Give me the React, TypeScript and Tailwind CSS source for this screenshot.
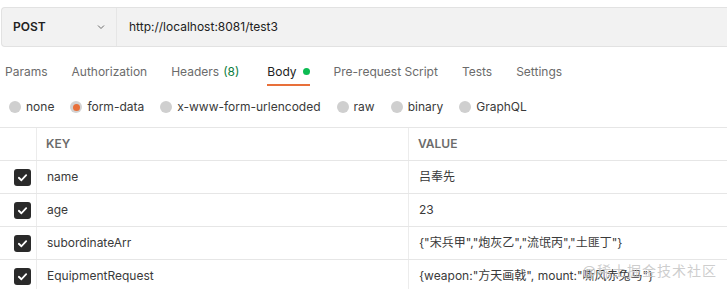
import React from "react";

const tabs = [
  { label: "Params" },
  { label: "Authorization" },
  { label: "Headers", count: "(8)" },
  { label: "Body", active: true },
  { label: "Pre-request Script" },
  { label: "Tests" },
  { label: "Settings" },
];

const bodyTypes = [
  { label: "none" },
  { label: "form-data", checked: true },
  { label: "x-www-form-urlencoded" },
  { label: "raw" },
  { label: "binary" },
  { label: "GraphQL" },
];

const rows = [
  { key: "name", value: "吕奉先" },
  { key: "age", value: "23" },
  { key: "subordinateArr", value: '{"宋兵甲","炮灰乙","流氓丙","土匪丁"}' },
  { key: "EquipmentRequest", value: '{weapon:"方天画戟", mount:"嘶风赤兔马"}' },
];

function Check() {
  return (
    <div className="w-[17px] h-[17px] rounded-[3px] bg-[#2a2a2a] flex items-center justify-center">
      <svg width="11" height="11" viewBox="0 0 12 12" fill="none">
        <path d="M2 6.3 L4.8 9 L10 3.4" stroke="white" strokeWidth="2" strokeLinecap="round" strokeLinejoin="round" />
      </svg>
    </div>
  );
}

export default function App() {
  return (
    <div
      className="w-[727px] h-[289px] overflow-hidden bg-white relative text-[12px] text-[#212121]"
      style={{ fontFamily: 'Inter, "Noto Sans CJK SC", sans-serif' }}
    >
      {/* url bar */}
      <div className="pt-[7px] pl-[1px]">
        <div className="flex h-[40px] bg-[#f2f2f2] border border-[#e2e2e2] rounded-l-[4px] border-r-0">
          <div className="w-[115px] flex items-center justify-between pl-[11px] pr-[10px] border-r border-[#e6e6e6]">
            <span className="font-semibold text-[12px] text-[#212121]">POST</span>
            <svg width="10" height="10" viewBox="0 0 10 10" fill="none">
              <path d="M2 3.5 L5 6.5 L8 3.5" stroke="#6b6b6b" strokeWidth="1" />
            </svg>
          </div>
          <div className="flex items-center pl-[12px] text-[#212121]">http://localhost:8081/test3</div>
        </div>
      </div>

      {/* tabs */}
      <div className="flex gap-[24px] pl-[5px] mt-[14px] h-[33px]">
        {tabs.map((t) => (
          <div key={t.label} className={`relative flex items-start pt-[2px] ${t.active ? "ml-[4px]" : ""}`}>
            <span className={t.active ? "text-[#212121]" : "text-[#6b6b6b]"}>{t.label}</span>
            {t.count && <span className="ml-[4px] text-[#0c7d3e]">{t.count}</span>}
            {t.active && <span className="ml-[6px] mt-[5px] w-[7px] h-[7px] rounded-full bg-[#0cbb52]" />}
            {t.active && <div className="absolute left-0 right-0 top-[23px] h-[2px] bg-[#e8703a]" />}
          </div>
        ))}
      </div>

      {/* body types */}
      <div className="flex items-center pl-[9px] h-[24px] mt-[1px]">
        {bodyTypes.map((b) => (
          <div key={b.label} className="flex items-center mr-[16px]">
            {b.checked ? (
              <span className="w-[12px] h-[12px] rounded-full bg-[#d2d2d2] flex items-center justify-center">
                <span className="w-[7px] h-[7px] rounded-full bg-[#e8703a]" />
              </span>
            ) : (
              <span className="w-[12px] h-[12px] rounded-full bg-[#cfcfcf]" />
            )}
            <span className="ml-[5px] text-[#3a3a3a]">{b.label}</span>
          </div>
        ))}
      </div>

      {/* table */}
      <div className="mt-[8px] border-t border-[#e6e6e6]">
        <div className="grid grid-cols-[37px_372px_1fr] h-[33px] border-b border-[#e6e6e6]">
          <div className="border-r border-[#ececec]" />
          <div className="border-r border-[#ececec] flex items-center pl-[9px] text-[12px] font-semibold text-[#6b6b6b]">KEY</div>
          <div className="flex items-center pl-[9px] text-[12px] font-semibold text-[#6b6b6b]">VALUE</div>
        </div>
        {rows.map((r) => (
          <div key={r.key} className="grid grid-cols-[37px_372px_1fr] h-[33px] border-b border-[#e6e6e6]">
            <div className="border-r border-[#ececec] flex items-center justify-end pr-[5px]">
              <Check />
            </div>
            <div className="border-r border-[#ececec] flex items-center pl-[10px] text-[#3a3a3a]">{r.key}</div>
            <div className="flex items-center pl-[10px] text-[#3a3a3a]">{r.value}</div>
          </div>
        ))}
      </div>

      {/* watermark */}
      <div className="absolute right-[10px] bottom-[8px] text-[14px] text-[#c8c8c8]/90 tracking-[1px]">@稀土掘金技术社区</div>
    </div>
  );
}
